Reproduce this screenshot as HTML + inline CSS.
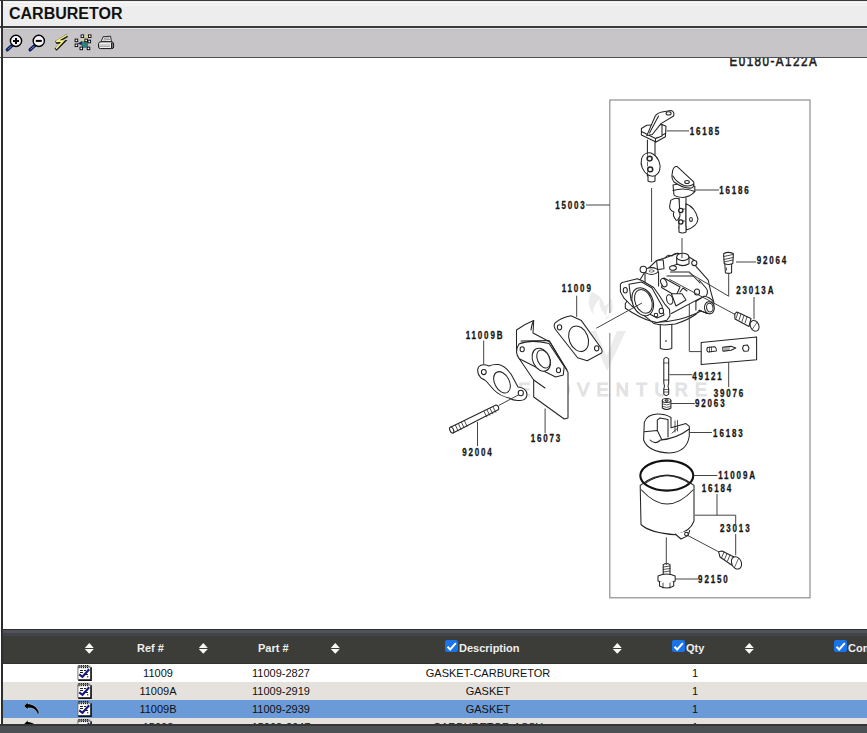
<!DOCTYPE html>
<html><head><meta charset="utf-8">
<style>
*{margin:0;padding:0;box-sizing:border-box}
html,body{width:867px;height:733px;overflow:hidden;background:#fff;font-family:"Liberation Sans",sans-serif}
#lb{position:absolute;left:1px;top:0;width:2px;height:726px;background:#2e2e2e}
#top{position:absolute;left:0;top:0;width:867px;height:1px;background:#3a3a3a}
#hdr{position:absolute;left:3px;top:1px;width:864px;height:25px;background:linear-gradient(#ededed 0px,#ededed 1px,#f8f8f8 1px,#f8f8f8 2px,#efefef 2px,#efefef 4px,#f5f5f5 4px,#f5f5f5 5px,#ededed 5px)}
#hdr .t{position:absolute;left:6px;top:4px;font-weight:bold;font-size:16px;color:#111}
#hl{position:absolute;left:0;top:26px;width:867px;height:2px;background:#3b3b3b}
#hl2{position:absolute;left:3px;top:28px;width:864px;height:1px;background:#e8e8e8}
#tb{position:absolute;left:3px;top:29px;width:864px;height:28px;background:linear-gradient(#bebdc1 0px,#bebdc1 1px,#c7c5c8 1px)}
#tl{position:absolute;left:0;top:57px;width:867px;height:1px;background:#505050}
#gridh{position:absolute;left:3px;top:629px;width:864px;height:35px;background:#3c3d39;border-bottom:1px solid #333}
#gridh .s{position:absolute;left:0;top:0;width:864px;height:7px;background:linear-gradient(#2e2e2e 0px,#2e2e2e 1px,#50535a 1px,#50535a 4px,#42444a 4px,#42444a 7px)}
.row{position:absolute;left:3px;width:864px;height:18px;font-size:11px;color:#111}
#r1{top:664px;background:#fff}
#r2{top:682px;background:#e5e2de}
#r3{top:700px;background:#6a9bd8}
#r4{top:718px;background:#e5e2de;height:7px}
#bot1{position:absolute;left:0;top:724px;width:867px;height:2px;background:#353535}
#bot{position:absolute;left:0;top:726px;width:867px;height:7px;background:#4d5053}
.c{position:absolute;top:3px;white-space:nowrap}
.h{position:absolute;color:#eee;font-weight:bold;font-size:11px;top:13px;white-space:nowrap}
.sort{position:absolute;top:14px;width:9px;height:11px;overflow:visible}
.cb{position:absolute;top:11px;width:13px;height:12px;background:#1a73e8;border-radius:2px;overflow:hidden}
svg{position:absolute;left:0;top:0}
</style></head><body>
<div id="dia"><svg width="867" height="733" viewBox="0 0 867 733" style="position:absolute;left:0;top:0">
<!-- watermark -->
<g fill="#ececec" stroke="none">
<path d="M592 292 C587 300 588 308 594 315 C592 309 595 303 600 299 C598 306 602 312 607 316 C606 310 608 305 611 302 C611 310 609 316 604 320 C612 318 615 308 611 298 C609 304 606 306 604 306 C605 300 598 294 592 292Z"/>
<path d="M590 331 L596 331 L606.5 356 L617 331 L626 331 L607 371Z"/>
<path d="M598 331 L606.5 349 L615 331Z" fill="#fff"/>
</g>
<text x="501" y="395.5" font-family="Liberation Sans" font-size="18" fill="#e2e2e2" textLength="206" lengthAdjust="spacing" stroke="#e2e2e2" stroke-width="1.1">LEADVENTURE</text>
<!-- box -->
<rect x="609.8" y="100" width="200.2" height="497.8" fill="none" stroke="#8e8e8e" stroke-width="1.2"/>
<line x1="610" y1="313" x2="610" y2="333" stroke="#fff" stroke-width="3"/>
<!-- drawing number -->
<text transform="translate(729.5 66) scale(0.8 1)" font-family="Liberation Sans" font-size="14.5" fill="#1e1e1e" stroke="#1e1e1e" stroke-width="0.6" textLength="109" lengthAdjust="spacing">E0180-A122A</text>
<!-- labels -->
<g font-family="Liberation Sans" font-weight="bold" font-size="10" letter-spacing="2.3" fill="#161616" stroke="#161616" stroke-width="0.3">
<text transform="translate(689.7 135.0) scale(0.8 1)">16185</text>
<text transform="translate(719.2 193.9) scale(0.8 1)">16186</text>
<text transform="translate(555.2 209.4) scale(0.8 1)">15003</text>
<text transform="translate(756.7 264.4) scale(0.8 1)">92064</text>
<text transform="translate(561.7 292.4) scale(0.8 1)">11009</text>
<text transform="translate(736.2 294.4) scale(0.8 1)">23013A</text>
<text transform="translate(465.7 339.1) scale(0.8 1)">11009B</text>
<text transform="translate(692.2 379.7) scale(0.8 1)">49121</text>
<text transform="translate(713.7 396.6) scale(0.8 1)">39076</text>
<text transform="translate(695.0 407.4) scale(0.8 1)">92063</text>
<text transform="translate(713.1 437.2) scale(0.8 1)">16183</text>
<text transform="translate(530.7 442.4) scale(0.8 1)">16073</text>
<text transform="translate(462.2 455.8) scale(0.8 1)">92004</text>
<text transform="translate(718.2 479.0) scale(0.8 1)">11009A</text>
<text transform="translate(701.7 492.4) scale(0.8 1)">16184</text>
<text transform="translate(720.0 532.4) scale(0.8 1)">23013</text>
<text transform="translate(698.1 583.2) scale(0.8 1)">92150</text>
</g>
<!-- parts -->
<g stroke="#242424" stroke-width="1.05" fill="#fff" stroke-linejoin="round" stroke-linecap="round">
<!-- 16185 choke lever -->
<path d="M647.4 140 V176 M655 140 V176"/>
<path d="M648 174 V181 Q651.5 183 655 181 V174"/>
<ellipse cx="650.6" cy="164.5" rx="9" ry="12" transform="rotate(-22 650.6 164.5)"/>
<ellipse cx="649.6" cy="158.6" rx="2.5" ry="2.3" stroke-width="1.5"/><ellipse cx="650.2" cy="169.4" rx="2.5" ry="2.3" stroke-width="1.5"/>
<path d="M647.5 153 V155.5 M647.5 162 V166 M647.5 172 V175" stroke-width="0.7"/>
<path d="M641.4 128.5 L646.8 125.2 L662 124.6 L666 126.3 L665.4 136.7 L656 142 L641.4 135Z"/>
<path d="M641.4 131.5 L655.5 138.5 L665.4 133.5 M655.5 138.5 V142"/>
<path d="M662 124.6 V136 L657 138"/>
<path d="M646.8 135.6 L655 116.5 Q657 113 662 112 L670.8 110.6 Q675 111.5 673.6 116 L661 123.6 L652.3 134.5Z"/>
<path d="M649.5 133 L658.5 116"/>
<ellipse cx="668.6" cy="113.4" rx="2.5" ry="1.6"/>
<!-- 16186 throttle lever -->
<path d="M679 198 V228 M686 198 V230"/>
<path d="M670.7 200.4 Q676 197 679 199 L680 216 Q677 222 676 220 Q672 215 674 212 Q669 210 669.7 206Z"/>
<path d="M686 203.7 Q695 207 698 219 Q697 227 686 230Z"/>
<ellipse cx="691" cy="219.5" rx="1.4" ry="2"/>
<path d="M680 209 L685 209 M680 221 L685 221" stroke-width="0.7"/>
<circle cx="680.8" cy="210.5" r="2.1" stroke-width="1.4"/><circle cx="680.8" cy="222" r="2.1" stroke-width="1.4"/>
<path d="M679 226.6 V232 Q682.5 234 686 232 V226.6"/>
<path d="M673 185 Q684 182 694.8 186.2 V191.7 Q690 197 683 197.5 Q676 197 674 195 Z"/>
<path d="M673 190.5 Q684 187 694.8 191.5"/>
<path d="M672.4 172.5 Q673 166 677.3 166.6 L693.7 181.8 Q694.5 187 691.5 188 Q684 189 674 182 Q671 178 672.4 172.5Z"/><path d="M673 176 Q676 182 684 185.5 Q690 187 693.8 184" fill="none"/>
<ellipse cx="687" cy="182" rx="2.3" ry="1.5"/>
<!-- carb body -->
<path d="M660.3 322 V348.5 Q666 350.5 671.8 348.5 V322"/>
<path d="M665.3 341 h1.3" stroke-width="1"/>
<path d="M625.3 303.8 V308.2 Q640 318 651.5 321.3 L653.7 323.5 Q662 326 675.5 324.1 Q688 320 696 314.3 L699.2 310.2 L707.4 313.5 L713 311 L714 303 L710.6 290.8 L708.2 280.2 L696 266.3 L694 260 L689 257 L678 253.2 L664.8 258 L656.6 260.5 L645 271.7 Z"/>
<path d="M655 322.5 Q668 322 679.5 319.2 Q692 316 700.8 311"/>
<path d="M671.4 313.5 L700.8 297.9 M695.9 301.2 L704.1 296.3"/>
<path d="M699.2 310.2 Q704 312 707.4 313.5"/>
<ellipse cx="709.4" cy="307.8" rx="4.9" ry="6.1" transform="rotate(-10 709.4 307.8)"/>
<ellipse cx="709.8" cy="307.6" rx="3.2" ry="4.4" transform="rotate(-10 709.8 307.6)"/>
<path d="M704.1 296.3 Q710 297 713.5 302" fill="none"/>
<path d="M695.9 301.2 V310"/>
<path d="M664 278 L680 287 L676 296 L661.5 287.5Z"/>
<ellipse cx="663.8" cy="282.6" rx="2.8" ry="4.4" transform="rotate(-25 663.8 282.6)"/>
<path d="M670.5 272 L689.4 272 L700 283 M667 276 L693 276 M672 266 L684 262"/>
<path d="M671.4 293.8 H682 L686 300 L676 306 Z"/>
<ellipse cx="669.7" cy="299.5" rx="3" ry="4.8" transform="rotate(-15 669.7 299.5)"/>
<path d="M680 292 L683 288 L687 291" fill="none"/>
<path d="M699 280 L706 288 Q709 292 706 296" fill="none"/>
<ellipse cx="697" cy="292" rx="2.6" ry="3" />
<path d="M645 271.7 V283 M658.6 271.7 V286"/>
<ellipse cx="651.5" cy="271" rx="6.6" ry="3.4"/>
<ellipse cx="651.5" cy="271" rx="2.5" ry="1.2" stroke-width="0.6"/>
<circle cx="643.3" cy="269.5" r="3.2"/>
<path d="M676.7 256.9 V263.8 Q682.8 267.5 689 263.8 V256.9"/>
<ellipse cx="682.8" cy="256.9" rx="6.1" ry="3.7"/>
<path d="M656.6 260.5 L663.2 259.7 L664 268.7 L657.5 269.5 Z"/>
<path d="M664.8 258 Q668 254 672 256 Q674 253 678 253.2" fill="none"/>
<ellipse cx="673" cy="268" rx="3.4" ry="2.3"/>
<circle cx="694.3" cy="263" r="2.6"/>
<path d="M620.4 284.2 Q622 282 624.2 282 L637.3 278.7 L642.8 281 L653.7 287.5 L659 295 L664.6 303.8 L669.5 309.3 L670 315.9 L666.8 320.2 L657 322.4 L651.5 321.3 L631.8 306 L624.2 298.4 L620.4 291.8 Z"/>
<path d="M629 284.2 L641.7 282 L652 288 L662 306 L664 315 L657 318 L646 312 L631 300Z" fill="none"/>
<ellipse cx="642.7" cy="301.7" rx="10.2" ry="14.5" transform="rotate(-22 642.7 301.7)"/>
<ellipse cx="643.4" cy="301.4" rx="8.2" ry="12.3" transform="rotate(-22 643.4 301.4)"/>
<ellipse cx="625.3" cy="290.2" rx="2" ry="2.7"/><ellipse cx="661.3" cy="311" rx="2.2" ry="2.8"/>
<circle cx="656" cy="315" r="1.8"/>
<!-- 92064 screw -->
<path d="M724.8 263.5 L725.4 272.7 Q728.5 274 731.6 272.7 V263.5"/>
<path d="M723.6 253.7 Q728 251 733.4 253.7 L732.8 263.5 Q728 265.5 724.2 263.5Z"/>
<path d="M723.8 256.5 L733 254.5 M724 259.5 L733 257.5 M724 262 L733 260" stroke-width="0.8"/>
<path d="M726.5 268 v2" stroke-width="0.8"/>
<!-- 23013A screw -->
<path d="M734.6 313.9 L737 312 L751 318.5 L749 326.5 L735 319 Z"/>
<path d="M738 312.5 L736 318.5 M741 314 L739 320 M744 315.5 L742 321.5 M747 317 L745 323" stroke-width="0.8"/>
<ellipse cx="754.6" cy="325.8" rx="4.2" ry="5.6" transform="rotate(-25 754.6 325.8)"/>
<path d="M752.5 329 L757 322.5" stroke-width="0.7"/>
<!-- jets box 39076 -->
<path d="M701.2 342.5 L756.6 336.9 L756.6 359.8 L701.2 364.6Z"/>
<path d="M707.4 347.5 L714.8 346.7 Q717 348.5 716.4 351 L708 352 Q706 350 707.4 347.5Z"/>
<path d="M709.5 347 v5 M711.5 347 v4.8" stroke-width="0.7"/>
<path d="M722.7 347.3 L731 346.3 L735.8 348 L731 350.3 L723 351.2 Z"/>
<path d="M725 347 v4 M727 346.8 v4 M729 346.5 v4" stroke-width="0.7"/>
<path d="M743.5 345.5 L747.5 345 L749 348 L748 351 L744 351.3 L742.5 348.5Z"/>
<!-- 49121 needle -->
<path d="M663.8 359 Q666.2 356 668.7 359 V383 L668 386 L668.7 389 V394 Q666.2 397 663.8 394 V389 L664.5 386 L663.8 383Z"/>
<path d="M663.8 363 H668.7 M663.8 380 H668.7 M663.8 389.5 H668.7 M663.8 392 H668.7" stroke-width="0.7"/>
<!-- 92063 jet -->
<path d="M662.3 400.5 V408 Q666.6 411 670.9 408 V400.5"/>
<ellipse cx="666.6" cy="400.5" rx="4.3" ry="2"/>
<ellipse cx="666.6" cy="400.5" rx="1.5" ry="0.8"/>
<path d="M663 404 Q666.6 406 670.5 404 M663 406.5 Q666.6 408.5 670.5 406.5" stroke-width="0.7"/>
<!-- 16183 float -->
<path d="M644.3 422.3 Q647 414.5 657.3 414.1 Q665 414 671 417.5 L671 427.7 L686 423.6 L689.3 426.4 V436 Q687 452 669.6 453 Q648 452 643.6 440Z"/>
<path d="M660 440 Q676 439 689.3 429"/>
<path d="M644.3 431.8 L657.3 430.5 L662 440"/>
<path d="M657.3 420.2 L660 418 L668 419.5 V437 M657.3 420.2 V430.5"/>
<path d="M650 440 Q655 445 660 440.5" fill="none"/>
<path d="M675 421 V432 M677.5 420.5 V431 M672 433 L678 428" stroke-width="0.8"/>
<!-- 16184 bowl -->
<path d="M640.2 485.3 L641 524.5 Q650 533 676 534.8 Q690 532 694 521 V485.3 Q667 465 640.2 485.3Z"/>
<path d="M641.5 490 Q667 518 693 490" fill="none"/>
<path d="M675.2 534 L681 539 L688 535.6 L689.7 530.5"/>
<circle cx="686.4" cy="534" r="1.8"/>
<!-- 11009A o-ring -->
<ellipse cx="666.8" cy="475.6" rx="26.5" ry="15" fill="none" stroke="#111" stroke-width="2.1"/>
<path d="M645 483.5 Q666.8 468 689.5 483.5" fill="none"/>
<!-- 23013 drain screw -->
<path d="M718.6 551.8 L722 551 L734 557 L731.5 565 L720 557Z"/>
<path d="M724 552 L721.5 558 M727 553.5 L724.5 559.5 M730 555 L727.5 561" stroke-width="0.8"/>
<ellipse cx="736.5" cy="562.9" rx="4.8" ry="6.4" transform="rotate(-25 736.5 562.9)"/>
<path d="M734.5 567.5 L738.5 558.5" stroke-width="0.7"/>
<!-- 92150 bolt -->
<path d="M663.2 564.6 V575 H670 V564.6 Q666.6 562.5 663.2 564.6Z"/>
<path d="M663.2 567 L670 566 M663.2 569.5 L670 568.5 M663.2 572 L670 571" stroke-width="0.8"/>
<path d="M658 576 Q666.6 572 675.2 576 V581 Q666.6 585 658 581Z"/>
<path d="M659.5 581.5 V586 Q666.6 590 673.7 586 V581.5"/>
<path d="M663 583 V588 M670 583 V588" stroke-width="0.8"/>
<!-- 11009 gasket -->
<path d="M554.7 323.4 Q560 318 571 315.8 L581.4 320.6 L600.5 347.3 Q603 351 601.5 353 L587.2 360.7 L577.6 357.8 L556.6 331 Q553 327 554.7 323.4Z"/>
<ellipse cx="578.6" cy="338.7" rx="9.4" ry="13.2" transform="rotate(-22 578.6 338.7)"/>
<ellipse cx="559.5" cy="327.3" rx="2.2" ry="2.6"/><ellipse cx="596.7" cy="348.3" rx="2.2" ry="2.6"/>
<!-- 16073 shield -->
<path d="M516.5 330 Q525 324 533.7 320.6 L533 333 L550 342 L568 372.2 V418 L564.2 419 L533.7 397 V380 L519.3 358.8 L516.5 350Z"/>
<path d="M531 330 Q532 323 533.7 320.6" fill="none"/>
<path d="M519 344 Q530 339 549 343.5 L564.2 366.4 L563.3 375 L555.6 377 L519.3 358.8 Q514 352 519 344Z"/>
<path d="M521 341 L549 340.5 L567 370" fill="none"/>
<ellipse cx="541.3" cy="359.7" rx="8.5" ry="12" transform="rotate(-25 541.3 359.7)"/>
<ellipse cx="543.5" cy="359" rx="6" ry="9.5" transform="rotate(-25 543.5 359)"/>
<ellipse cx="522.2" cy="349.2" rx="2.1" ry="2.5"/><ellipse cx="558.5" cy="370.3" rx="2.1" ry="2.5"/>
<path d="M533.7 380 L545 388"/>
<!-- 11009B gasket -->
<path d="M489 366 Q482 363 478.5 367 Q476 373 481 378 Q485 380 486 381 L494 390 Q500 396 509 398 Q514 401 519 400.5 Q526 401 527 395 Q527 388 518 387 L511 374 Q505 366 498.7 364.6 Q493 364 489 366Z"/>
<ellipse cx="502" cy="382.3" rx="7.3" ry="11.4" transform="rotate(-28 502 382.3)"/>
<ellipse cx="483.8" cy="372" rx="2.4" ry="2.6"/><ellipse cx="520.8" cy="393" rx="2.6" ry="2.8"/>
<!-- 92004 stud -->
<path d="M451 427 L496 405 Q499 405.5 498.7 409.5 L453 433 Q449 432 451 427Z"/>
<ellipse cx="451.7" cy="430" rx="1.8" ry="3.2" transform="rotate(-25 451.7 430)"/>
<path d="M484 411.5 L486.8 416.8 M487 410 L489.8 415.3 M490 408.5 L492.8 413.8 M493 407 L495.8 412.3 M455.5 425.3 L458 430.8 M458.5 423.8 L461 429.3 M461.5 422.3 L464 427.8 M464.5 420.8 L467 426.3" stroke-width="0.8"/>
</g>
<!-- leader lines -->
<g stroke="#444" stroke-width="1" fill="none">
<path d="M666.5 130.9 H689"/>
<path d="M694.8 190 H719"/>
<path d="M586 205 H610"/>
<path d="M651.6 188 V262"/>
<path d="M682 238 V258"/>
<path d="M736 262 H756"/>
<path d="M728.7 273 V296.2 L689.3 273"/>
<path d="M669.3 279.3 L735.5 314.7"/>
<path d="M754 297 V319.3"/>
<path d="M576.7 295.7 V316.8"/>
<path d="M596.4 328.2 L642 303"/>
<path d="M689.3 304 V351.6 H701.6"/>
<path d="M728.7 362.4 V387"/>
<path d="M669.3 374.7 H692.4"/>
<path d="M671 403.5 H694.8"/>
<path d="M689.3 432.5 H711.9"/>
<path d="M694 475.5 H717.3"/>
<path d="M717 494 V515.2 M694.8 515.2 H735.7 V524.5 M735.7 534 V555.2"/>
<path d="M688 535.6 L718.6 551.8"/>
<path d="M666.3 537.3 V565"/>
<path d="M675.2 579 H698.2"/>
<path d="M483.7 340.5 V364.6"/>
<path d="M498.7 405.5 L519 394.6"/>
<path d="M477.5 421.9 V446"/>
<path d="M545.1 408.5 V433"/>
</g>
</svg>
</div>
<div id="top"></div>
<div id="hdr"><div class="t">CARBURETOR</div></div>
<div id="hl"></div><div id="hl2"></div>
<div id="tb"></div><svg width="120" height="28" viewBox="3 29 120 28" style="position:absolute;left:3px;top:29px">
<!-- zoom in -->
<path d="M12 45.5 L7.3 49.8" stroke="#0c1f5a" stroke-width="3.2" stroke-linecap="round"/>
<path d="M11.3 46.3 L8 49.2" stroke="#6c8cd0" stroke-width="1" stroke-linecap="round"/>
<circle cx="16" cy="40.9" r="5.6" fill="#f4f4f4" stroke="#000" stroke-width="1.4"/>
<path d="M13 40.9 H19 M16 37.9 V43.9" stroke="#000" stroke-width="2"/>
<!-- zoom out -->
<path d="M34.8 45.5 L30.1 49.8" stroke="#0c1f5a" stroke-width="3.2" stroke-linecap="round"/>
<path d="M34.1 46.3 L30.8 49.2" stroke="#6c8cd0" stroke-width="1" stroke-linecap="round"/>
<circle cx="38.8" cy="40.9" r="5.6" fill="#f4f4f4" stroke="#000" stroke-width="1.4"/>
<path d="M35.8 40.9 H41.8" stroke="#000" stroke-width="2"/>
<!-- lightning -->
<path d="M67.2 35.6 L56 42.3 L63.6 41.7 L55.6 49.8" stroke="#161616" stroke-width="3" fill="none" stroke-linejoin="miter"/>
<path d="M66.8 35.1 L56.2 41.4 L63.2 40.9 L56 48.6" stroke="#f2f27e" stroke-width="1.6" fill="none" stroke-linejoin="miter"/>
<!-- select -->
<path d="M77.5 43.5 L84 40 L84.5 46.5 Z" fill="#1c2460"/>
<circle cx="84.8" cy="38.6" r="2.8" fill="none" stroke="#dcd890" stroke-width="1.6"/>
<circle cx="84.8" cy="44.6" r="3.4" fill="#2f7f7a"/>
<g fill="#fff" stroke="#000" stroke-width="0.9">
<rect x="81.1" y="34.9" width="2.6" height="2.6"/><rect x="88.4" y="34.9" width="2.6" height="2.6"/>
<rect x="75.1" y="39.1" width="2.6" height="2.6"/><rect x="75.1" y="44" width="2.6" height="2.6"/>
<rect x="84.9" y="39.1" width="2.6" height="2.6"/><rect x="88" y="40.2" width="2.6" height="2.6"/>
<rect x="80" y="47.1" width="2.6" height="2.6"/><rect x="87.2" y="47.1" width="2.6" height="2.6"/>
</g>
<!-- printer -->
<path d="M101.2 41.8 L103 36.8 L110.5 36.2 L111.5 41.8Z" fill="#fff" stroke="#111" stroke-width="0.9" stroke-linejoin="round"/>
<path d="M103.8 38.3 L109.5 37.9 M103.3 40 L110 39.6" stroke="#444" stroke-width="0.7"/>
<path d="M98.6 43.5 Q98.8 41.8 101 41.8 H111.5 Q113.6 41.8 113.6 44 V47 Q113.6 48.6 111.8 48.6 H100.4 Q98.6 48.6 98.6 47Z" fill="#f0f0f0" stroke="#111" stroke-width="1"/>
<path d="M99.2 45 H110 M99.2 46.5 H110" stroke="#8a8a8a" stroke-width="0.7"/>
<path d="M111.8 42.5 V48" stroke="#222" stroke-width="1.6"/>
</svg>
<div id="tl"></div>
<div id="lb"></div>
<div id="gridh"><div class="s"></div><svg class="sort" style="left:82px" viewBox="0 0 9 11"><path d="M-0.2 4.9 L4.3 0 L8.8 4.9Z M-0.2 5.9 L4.3 10.8 L8.8 5.9Z" fill="#f8f8f8"/></svg><div class="h" style="left:134px">Ref #</div><svg class="sort" style="left:196px" viewBox="0 0 9 11"><path d="M-0.2 4.9 L4.3 0 L8.8 4.9Z M-0.2 5.9 L4.3 10.8 L8.8 5.9Z" fill="#f8f8f8"/></svg><div class="h" style="left:255px">Part #</div><svg class="sort" style="left:328px" viewBox="0 0 9 11"><path d="M-0.2 4.9 L4.3 0 L8.8 4.9Z M-0.2 5.9 L4.3 10.8 L8.8 5.9Z" fill="#f8f8f8"/></svg><div class="cb" style="left:442px"><svg viewBox="0 0 13 13" width="13" height="13" style="position:absolute;left:0;top:0"><path d="M2.5 6.8 L5.2 9.5 L10.8 3.2" stroke="#fff" stroke-width="2" fill="none"/></svg></div><div class="h" style="left:456px">Description</div><svg class="sort" style="left:610px" viewBox="0 0 9 11"><path d="M-0.2 4.9 L4.3 0 L8.8 4.9Z M-0.2 5.9 L4.3 10.8 L8.8 5.9Z" fill="#f8f8f8"/></svg><div class="cb" style="left:669px"><svg viewBox="0 0 13 13" width="13" height="13" style="position:absolute;left:0;top:0"><path d="M2.5 6.8 L5.2 9.5 L10.8 3.2" stroke="#fff" stroke-width="2" fill="none"/></svg></div><div class="h" style="left:683px">Qty</div><svg class="sort" style="left:742px" viewBox="0 0 9 11"><path d="M-0.2 4.9 L4.3 0 L8.8 4.9Z M-0.2 5.9 L4.3 10.8 L8.8 5.9Z" fill="#f8f8f8"/></svg><div class="cb" style="left:831px"><svg viewBox="0 0 13 13" width="13" height="13" style="position:absolute;left:0;top:0"><path d="M2.5 6.8 L5.2 9.5 L10.8 3.2" stroke="#fff" stroke-width="2" fill="none"/></svg></div><div class="h" style="left:845px">Comments</div></div>
<div class="row" id="r1"><svg class="np" width="18" height="18" viewBox="0 0 18 18" style="position:absolute;left:73px;top:0px">
<path d="M1.9 2.4 H13.6 L14.8 3.6 V15.6 H1.9Z" fill="#fff" stroke="#6a6a6a" stroke-width="0.9"/>
<path d="M15.1 3.2 V16.3 H2.2" fill="none" stroke="#111" stroke-width="1.5"/>
<g fill="#1a1a1a"><rect x="2.4" y="1" width="1.3" height="1.3"/><rect x="4.6" y="1" width="1.3" height="1.3"/><rect x="6.8" y="1" width="1.3" height="1.3"/><rect x="8.9" y="1" width="1.3" height="1.3"/><rect x="11" y="1" width="1.3" height="1.3"/>
<rect x="2.4" y="3" width="1.3" height="1.2"/><rect x="4.6" y="3" width="1.3" height="1.2"/><rect x="6.8" y="3" width="1.3" height="1.2"/><rect x="8.9" y="3" width="1.3" height="1.2"/><rect x="11" y="3" width="1.3" height="1.2"/></g>
<rect x="13.2" y="1.6" width="1.2" height="2.4" fill="#888"/>
<g fill="#222"><rect x="4" y="6" width="3" height="1"/><rect x="8" y="6" width="2" height="1"/><rect x="4" y="8" width="3" height="1"/><rect x="9" y="10" width="3" height="1"/><rect x="11" y="12.2" width="1.3" height="1.1"/></g>
<path d="M3.2 10.4 L6.5 12.8 L13.2 5.2" fill="none" stroke="#17177e" stroke-width="2.1" stroke-linejoin="miter"/>
</svg><div class="c" style="left:105px;width:100px;text-align:center">11009</div><div class="c" style="left:218px;width:120px;text-align:center">11009-2827</div><div class="c" style="left:385px;width:200px;text-align:center">GASKET-CARBURETOR</div><div class="c" style="left:672px;width:40px;text-align:center">1</div></div>
<div class="row" id="r2"><svg class="np" width="18" height="18" viewBox="0 0 18 18" style="position:absolute;left:73px;top:0px">
<path d="M1.9 2.4 H13.6 L14.8 3.6 V15.6 H1.9Z" fill="#fff" stroke="#6a6a6a" stroke-width="0.9"/>
<path d="M15.1 3.2 V16.3 H2.2" fill="none" stroke="#111" stroke-width="1.5"/>
<g fill="#1a1a1a"><rect x="2.4" y="1" width="1.3" height="1.3"/><rect x="4.6" y="1" width="1.3" height="1.3"/><rect x="6.8" y="1" width="1.3" height="1.3"/><rect x="8.9" y="1" width="1.3" height="1.3"/><rect x="11" y="1" width="1.3" height="1.3"/>
<rect x="2.4" y="3" width="1.3" height="1.2"/><rect x="4.6" y="3" width="1.3" height="1.2"/><rect x="6.8" y="3" width="1.3" height="1.2"/><rect x="8.9" y="3" width="1.3" height="1.2"/><rect x="11" y="3" width="1.3" height="1.2"/></g>
<rect x="13.2" y="1.6" width="1.2" height="2.4" fill="#888"/>
<g fill="#222"><rect x="4" y="6" width="3" height="1"/><rect x="8" y="6" width="2" height="1"/><rect x="4" y="8" width="3" height="1"/><rect x="9" y="10" width="3" height="1"/><rect x="11" y="12.2" width="1.3" height="1.1"/></g>
<path d="M3.2 10.4 L6.5 12.8 L13.2 5.2" fill="none" stroke="#17177e" stroke-width="2.1" stroke-linejoin="miter"/>
</svg><div class="c" style="left:105px;width:100px;text-align:center">11009A</div><div class="c" style="left:218px;width:120px;text-align:center">11009-2919</div><div class="c" style="left:385px;width:200px;text-align:center">GASKET</div><div class="c" style="left:672px;width:40px;text-align:center">1</div></div>
<div class="row" id="r3"><svg class="undo" width="44" height="18" viewBox="0 0 44 18" style="position:absolute;left:0px;top:0px"><path d="M21 6.1 L24.9 2.3 L24.9 3.9 C29 3.9 33.5 6 35.6 11.2 C36.2 12.8 35.6 14.4 34.9 15.2 C34.6 13.6 33.8 11.5 32.2 10 C30.5 8.5 27.8 7.7 24.9 7.9 L24.9 9.6 Z" fill="#000" stroke="#fff" stroke-width="0.6" stroke-opacity="0.55"/></svg><svg class="np" width="18" height="18" viewBox="0 0 18 18" style="position:absolute;left:73px;top:0px">
<path d="M1.9 2.4 H13.6 L14.8 3.6 V15.6 H1.9Z" fill="#fff" stroke="#6a6a6a" stroke-width="0.9"/>
<path d="M15.1 3.2 V16.3 H2.2" fill="none" stroke="#111" stroke-width="1.5"/>
<g fill="#1a1a1a"><rect x="2.4" y="1" width="1.3" height="1.3"/><rect x="4.6" y="1" width="1.3" height="1.3"/><rect x="6.8" y="1" width="1.3" height="1.3"/><rect x="8.9" y="1" width="1.3" height="1.3"/><rect x="11" y="1" width="1.3" height="1.3"/>
<rect x="2.4" y="3" width="1.3" height="1.2"/><rect x="4.6" y="3" width="1.3" height="1.2"/><rect x="6.8" y="3" width="1.3" height="1.2"/><rect x="8.9" y="3" width="1.3" height="1.2"/><rect x="11" y="3" width="1.3" height="1.2"/></g>
<rect x="13.2" y="1.6" width="1.2" height="2.4" fill="#888"/>
<g fill="#222"><rect x="4" y="6" width="3" height="1"/><rect x="8" y="6" width="2" height="1"/><rect x="4" y="8" width="3" height="1"/><rect x="9" y="10" width="3" height="1"/><rect x="11" y="12.2" width="1.3" height="1.1"/></g>
<path d="M3.2 10.4 L6.5 12.8 L13.2 5.2" fill="none" stroke="#17177e" stroke-width="2.1" stroke-linejoin="miter"/>
</svg><div class="c" style="left:105px;width:100px;text-align:center">11009B</div><div class="c" style="left:218px;width:120px;text-align:center">11009-2939</div><div class="c" style="left:385px;width:200px;text-align:center">GASKET</div><div class="c" style="left:672px;width:40px;text-align:center">1</div></div>
<div class="row" id="r4"><svg class="undo" width="44" height="18" viewBox="0 0 44 18" style="position:absolute;left:0px;top:0px"><path d="M21 6.1 L24.9 2.3 L24.9 3.9 C29 3.9 33.5 6 35.6 11.2 C36.2 12.8 35.6 14.4 34.9 15.2 C34.6 13.6 33.8 11.5 32.2 10 C30.5 8.5 27.8 7.7 24.9 7.9 L24.9 9.6 Z" fill="#000" stroke="#fff" stroke-width="0.6" stroke-opacity="0.55"/></svg><svg class="np" width="18" height="18" viewBox="0 0 18 18" style="position:absolute;left:73px;top:0px">
<path d="M1.9 2.4 H13.6 L14.8 3.6 V15.6 H1.9Z" fill="#fff" stroke="#6a6a6a" stroke-width="0.9"/>
<path d="M15.1 3.2 V16.3 H2.2" fill="none" stroke="#111" stroke-width="1.5"/>
<g fill="#1a1a1a"><rect x="2.4" y="1" width="1.3" height="1.3"/><rect x="4.6" y="1" width="1.3" height="1.3"/><rect x="6.8" y="1" width="1.3" height="1.3"/><rect x="8.9" y="1" width="1.3" height="1.3"/><rect x="11" y="1" width="1.3" height="1.3"/>
<rect x="2.4" y="3" width="1.3" height="1.2"/><rect x="4.6" y="3" width="1.3" height="1.2"/><rect x="6.8" y="3" width="1.3" height="1.2"/><rect x="8.9" y="3" width="1.3" height="1.2"/><rect x="11" y="3" width="1.3" height="1.2"/></g>
<rect x="13.2" y="1.6" width="1.2" height="2.4" fill="#888"/>
<g fill="#222"><rect x="4" y="6" width="3" height="1"/><rect x="8" y="6" width="2" height="1"/><rect x="4" y="8" width="3" height="1"/><rect x="9" y="10" width="3" height="1"/><rect x="11" y="12.2" width="1.3" height="1.1"/></g>
<path d="M3.2 10.4 L6.5 12.8 L13.2 5.2" fill="none" stroke="#17177e" stroke-width="2.1" stroke-linejoin="miter"/>
</svg><div class="c" style="left:105px;width:100px;text-align:center">15003</div><div class="c" style="left:218px;width:120px;text-align:center">15003-2647</div><div class="c" style="left:385px;width:200px;text-align:center">CARBURETOR-ASSY</div><div class="c" style="left:672px;width:40px;text-align:center">1</div></div>
<div id="bot1"></div>
<div id="bot"></div>
</body></html>
